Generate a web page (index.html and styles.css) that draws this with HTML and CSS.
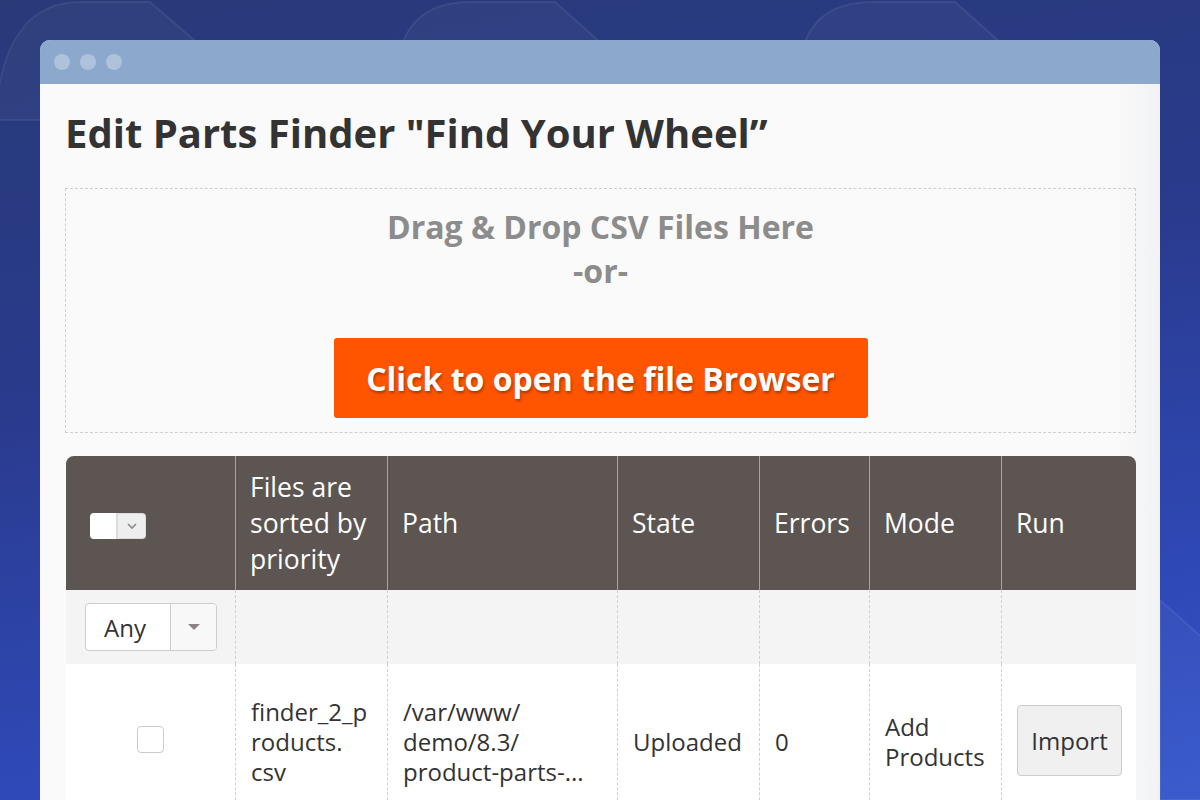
FILE: index.html
```html
<!DOCTYPE html>
<html>
<head>
<meta charset="utf-8">
<link rel="stylesheet" href="styles.css">
</head>
<body>
<svg class="bg-art" width="1200" height="800" viewBox="0 0 1200 800">
  <path d="M-5 120 C 0 40, 30 2, 80 2 L 150 2 L 200 45 L 200 120 Z" />
  <path d="M398 60 C 405 20, 430 2, 470 2 L 555 2 L 600 42 L 600 60 Z" />
  <path d="M800 60 C 807 20, 832 2, 872 2 L 955 2 L 1000 42 L 1000 60 Z" />
  <path d="M1160 600 L 1205 640 L 1205 800 L 1160 800 Z" />
</svg>
<div class="window">
  <div class="titlebar">
    <span class="dot"></span><span class="dot"></span><span class="dot"></span>
  </div>
  <div class="content">
    <h1 class="page-title">Edit Parts Finder "Find Your Wheel”</h1>
    <div class="dropzone">
      <div class="drop-text">Drag &amp; Drop CSV Files Here</div>
      <div class="drop-text">-or-</div>
      <button class="browse-btn">Click to open the file Browser</button>
    </div>
    <table class="grid">
      <colgroup>
        <col class="c1"><col class="c2"><col class="c3"><col class="c4"><col class="c5"><col class="c6"><col class="c7">
      </colgroup>
      <thead>
        <tr class="head-row">
          <th class="th-check">
            <span class="mass-select"><span class="ms-box"></span><span class="ms-arrow"><svg width="12" height="8" viewBox="0 0 12 8"><path d="M2 2l4 4 4-4" fill="none" stroke="#8a8a8a" stroke-width="1.6"/></svg></span></span>
          </th>
          <th>Files are sorted by priority</th>
          <th>Path</th>
          <th>State</th>
          <th>Errors</th>
          <th>Mode</th>
          <th>Run</th>
        </tr>
      </thead>
      <tbody>
        <tr class="filter-row">
          <td class="td-filter">
            <span class="select"><span class="sel-val">Any</span><span class="sel-arrow"><svg width="14" height="8" viewBox="0 0 14 8"><path d="M1 1h12L7 7z" fill="#8a8583"/></svg></span></span>
          </td>
          <td></td><td></td><td></td><td></td><td></td><td></td>
        </tr>
        <tr class="data-row">
          <td class="td-check"><span class="checkbox"></span></td>
          <td>finder_2_p<br>roducts.<br>csv</td>
          <td>/var/www/<br>demo/8.3/<br>product-parts-...</td>
          <td>Uploaded</td>
          <td>0</td>
          <td>Add<br>Products</td>
          <td><button class="import-btn">Import</button></td>
        </tr>
      </tbody>
    </table>
  </div>
</div>
</body>
</html>
```
FILE: styles.css
```css
html, body {
  margin: 0;
  padding: 0;
  height: 800px;
  overflow: hidden;
}
body {
  font-family: "Open Sans", "Liberation Sans", sans-serif;
  background: linear-gradient(170deg, #283a78 0%, #2a3a8c 40%, #2e48b4 75%, #3455cc 100%);
  position: relative;
  padding-top: 40px;
  box-sizing: border-box;
}
.bg-art {
  position: absolute;
  left: 0;
  top: 0;
}
.bg-art path {
  fill: rgba(255,255,255,0.035);
  stroke: rgba(255,255,255,0.07);
  stroke-width: 2;
}
.window {
  position: relative;
  margin: 0 40px;
  height: 760px;
  border-radius: 10px 10px 0 0;
  overflow: hidden;
  background: #fafafa;
}
.titlebar {
  height: 44px;
  background: #8ca9cd;
  display: flex;
  align-items: center;
  padding-left: 14px;
  gap: 10px;
}
.dot {
  width: 16px;
  height: 16px;
  border-radius: 50%;
  background: #aec2dc;
}
.content {
  padding: 0 24px 0 25px;
  background: linear-gradient(90deg, #fafafa 0%, #fafafa 96%, #f1f2f4 100%);
  height: 716px;
}
.page-title {
  margin: 0;
  padding-top: 22px;
  height: 82px;
  box-sizing: border-box;
  font-size: 40px;
  line-height: 54px;
  font-weight: 700;
  color: #333333;
  letter-spacing: 0;
  white-space: nowrap;
}
.dropzone {
  margin-top: 22px;
  border: 1px dashed #cfcfcf;
  height: 245px;
  box-sizing: border-box;
  display: flex;
  flex-direction: column;
  align-items: center;
  padding-top: 16px;
}
.drop-text {
  font-size: 32px;
  font-weight: 700;
  line-height: 44px;
  color: #8c8c8c;
}
.browse-btn {
  margin-top: 45px;
  width: 534px;
  height: 80px;
  border: none;
  border-radius: 3px;
  background: #ff5501;
  color: #ffffff;
  font-family: "Open Sans", "Liberation Sans", sans-serif;
  font-size: 32px;
  font-weight: 700;
  text-shadow: 1px 2px 3px rgba(0,0,0,0.35);
  padding: 0;
}
.grid {
  margin-top: 23px;
  margin-left: 1px;
  width: 1070px;
  border-collapse: separate;
  border-spacing: 0;
  table-layout: fixed;
  font-size: 24px;
  color: #333333;
}
.c1 { width: 169px; }
.c2 { width: 152px; }
.c3 { width: 230px; }
.c4 { width: 142px; }
.c5 { width: 110px; }
.c6 { width: 132px; }
.c7 { width: 135px; }
.head-row th {
  background: #5c5552;
  color: #ffffff;
  font-weight: 400;
  font-size: 26.5px;
  text-align: left;
  height: 134px;
  box-sizing: border-box;
  padding: 0 6px 0 14px;
  line-height: 36px;
  vertical-align: middle;
  border-left: 1px solid #a9a4a2;
}
.head-row th:first-child {
  border-left: none;
  border-top-left-radius: 8px;
}
.head-row th:last-child {
  border-top-right-radius: 8px;
}
.mass-select {
  display: inline-flex;
  width: 56px;
  height: 26px;
  border-radius: 4px;
  background: #dcdcdc;
  overflow: hidden;
  vertical-align: middle;
  margin-left: 10px;
}
.ms-box {
  width: 26px;
  height: 26px;
  background: #ffffff;
  border-radius: 4px 0 0 4px;
}
.ms-arrow {
  flex: 1;
  display: flex;
  align-items: center;
  justify-content: center;
  background: #eeeeee;
  margin: 1px 1px 1px 2px;
  border-radius: 0 3px 3px 0;
}
.filter-row td {
  background: #f4f4f4;
  height: 74px;
  box-sizing: border-box;
  border-left: 1px dashed #d0d0d0;
  padding: 0;
}
.filter-row td:first-child { border-left: none; }
.td-filter { padding-left: 19px !important; }
.select {
  display: flex;
  width: 132px;
  height: 48px;
  box-sizing: border-box;
  border: 1px solid #cccccc;
  border-radius: 4px;
  background: #ffffff;
  overflow: hidden;
}
.sel-val {
  width: 84px;
  display: flex;
  align-items: center;
  padding-left: 18px;
  box-sizing: border-box;
  font-size: 24px;
  color: #333333;
}
.sel-arrow {
  flex: 1;
  border-left: 1px solid #cccccc;
  background: #f8f8f8;
  display: flex;
  align-items: center;
  justify-content: center;
}
.data-row td {
  background: #ffffff;
  height: 156px;
  box-sizing: border-box;
  border-left: 1px dashed #d0d0d0;
  padding: 0 10px 0 15px;
  line-height: 30px;
  vertical-align: middle;
}
.data-row td:first-child { border-left: none; }
.td-check { padding: 0 !important; }
.checkbox {
  display: block;
  margin: -6px auto 0;
  width: 27px;
  height: 27px;
  box-sizing: border-box;
  border: 1px solid #cccccc;
  border-radius: 4px;
  background: #ffffff;
}
.import-btn {
  display: block;
  margin-top: -3px;
  width: 105px;
  height: 71px;
  border: 1px solid #cccccc;
  border-radius: 4px;
  background: #f0f0f0;
  color: #333333;
  font-family: "Open Sans", "Liberation Sans", sans-serif;
  font-size: 24px;
  padding: 0;
}
```
